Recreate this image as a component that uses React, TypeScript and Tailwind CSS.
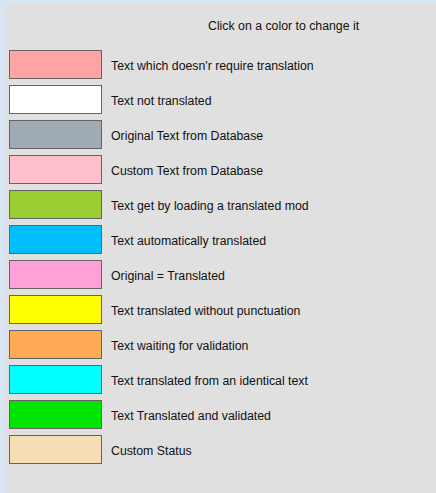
import React from "react";

const rows: { color: string; label: string }[] = [
  { color: "#ffa4a4", label: "Text which doesn'r require translation" },
  { color: "#ffffff", label: "Text not translated" },
  { color: "#a1abb5", label: "Original Text from Database" },
  { color: "#ffc0cb", label: "Custom Text from Database" },
  { color: "#9acd32", label: "Text get by loading a translated mod" },
  { color: "#00bfff", label: "Text automatically translated" },
  { color: "#ffa0d8", label: "Original = Translated" },
  { color: "#ffff00", label: "Text translated without punctuation" },
  { color: "#ffaa55", label: "Text waiting for validation" },
  { color: "#00ffff", label: "Text translated from an identical text" },
  { color: "#00e600", label: "Text Translated and validated" },
  { color: "#f5deb3", label: "Custom Status" },
];

export default function App() {
  return (
    <div
      className="w-[436px] h-[493px] bg-[#d8e4f1] flex"
      style={{ fontFamily: '"Liberation Sans", Arial, sans-serif' }}
    >
      <div className="ml-[5px] mt-[3px] flex-1 bg-[#e0e0e0] text-[12.3px] text-[#111]">
        <div className="h-[47px] pl-[203px] pt-[16px] leading-[14px]">
          Click on a color to change it
        </div>
        <div className="flex flex-col gap-[6px]">
          {rows.map((r) => (
            <div key={r.label} className="flex items-center h-[29px]">
              <div
                className="ml-[4px] w-[93px] h-[29px] border border-[#646464]"
                style={{ backgroundColor: r.color }}
              />
              <span className="ml-[9px] mt-[3px] leading-[14px]">{r.label}</span>
            </div>
          ))}
        </div>
      </div>
    </div>
  );
}
